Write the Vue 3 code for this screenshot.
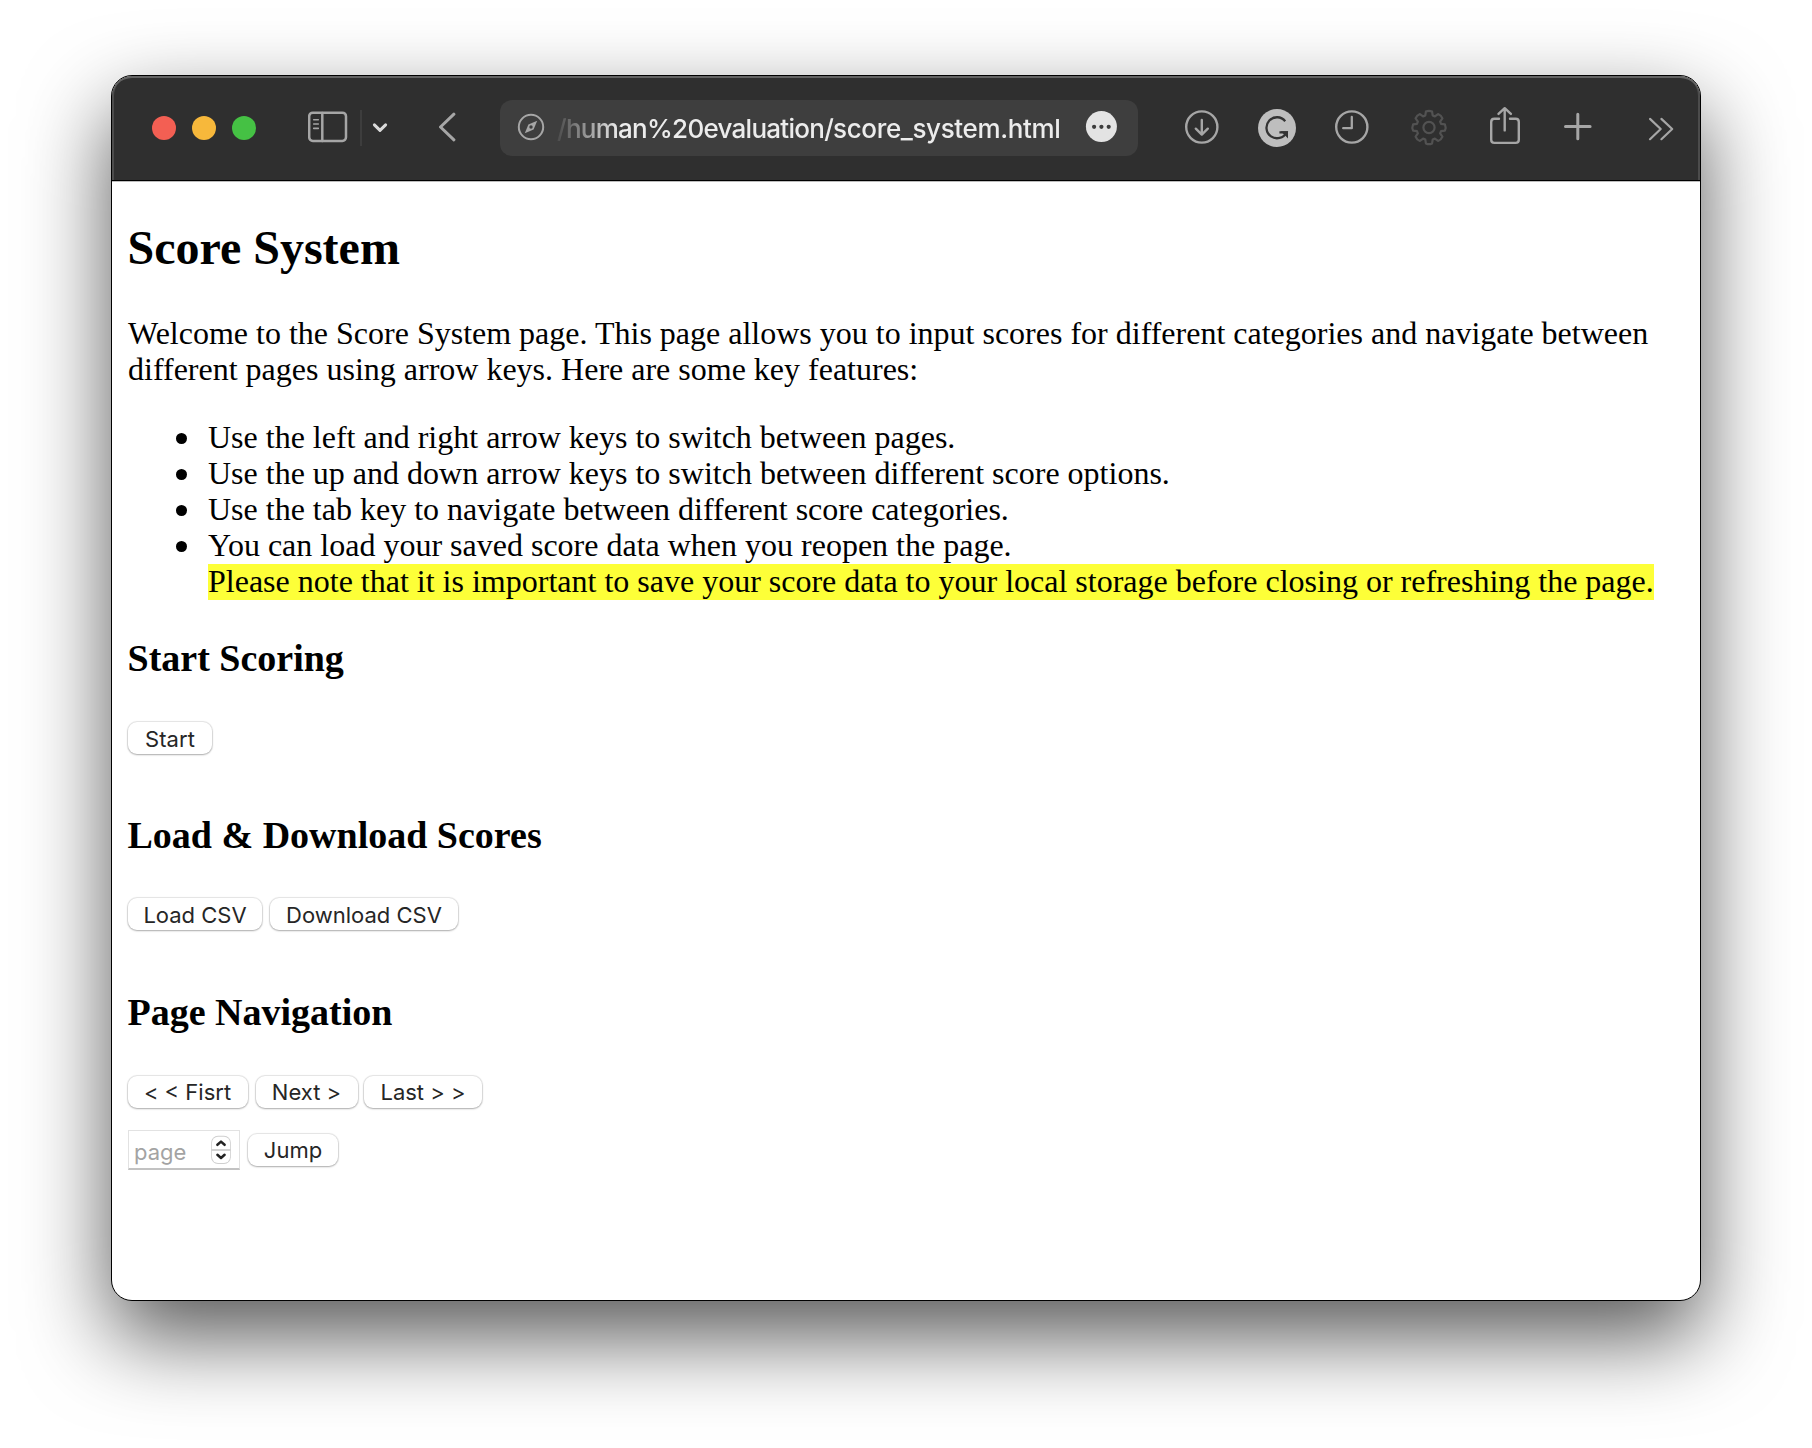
<script setup>
const tips = [
  'Use the left and right arrow keys to switch between pages.',
  'Use the up and down arrow keys to switch between different score options.',
  'Use the tab key to navigate between different score categories.',
]
const lights = ['red', 'amber', 'green']
const teeth = [0, 45, 90, 135, 180, 225, 270, 315]
const rad = (d) => (d * Math.PI) / 180
const pt = (r, d) => `${(r * Math.sin(rad(d))).toFixed(2)} ${(-r * Math.cos(rad(d))).toFixed(2)}`
const gear =
  teeth
    .map((a, i) => `${i ? 'L' : 'M'}${pt(12.6, a - 17)} L${pt(16.2, a - 11)} Q${pt(17.4, a)} ${pt(16.2, a + 11)} L${pt(12.6, a + 17)}`)
    .join(' ') + ' Z'
</script>

<template>
  <div class="desktop">
    <div class="window">
      <header class="toolbar">
        <div class="lights">
          <span v-for="c in lights" :key="c" class="light" :class="c"></span>
        </div>
        <svg class="icon sidebar" width="40" height="56" viewBox="0 0 40 56">
          <rect x="1.2" y="12.7" width="36.8" height="28.2" rx="3.6" stroke-width="2.5" />
          <path d="M14.3 13V41" stroke-width="2.5" />
          <path d="M5.7 19.7h4.6M5.7 24h4.6M5.7 28.4h4.6" stroke-width="1.6" />
        </svg>
        <span class="divider"></span>
        <svg class="icon chevron" width="16" height="56" viewBox="0 0 16 56">
          <path d="M2.4 24.9L8 30.4L13.6 24.9" stroke-width="3" />
        </svg>
        <svg class="icon back" width="18" height="56" viewBox="0 0 18 56">
          <path d="M15.9 14.2L2.5 27L15.9 39.8" stroke-width="3" />
        </svg>
        <div class="address">
          <svg class="icon compass" width="28" height="56" viewBox="0 0 28 56">
            <circle cx="14" cy="27" r="12.2" stroke-width="2" />
            <path class="needle" d="M20.2 20.8L16.6 29.5L7.8 33.3L11.4 24.6Z" />
            <circle class="hub" cx="14" cy="27" r="1.7" />
          </svg>
          <div class="url"><span class="folder">/human%20evaluation/</span><span class="file">score_system.html</span></div>
          <svg class="more" width="32" height="56" viewBox="0 0 32 56">
            <circle cx="16.4" cy="26.6" r="15.5" fill="#e3e3e3" />
            <g fill="#3c3c3c">
              <circle cx="9.1" cy="26.8" r="2.1" />
              <circle cx="16.4" cy="26.8" r="2.1" />
              <circle cx="23.7" cy="26.8" r="2.1" />
            </g>
          </svg>
        </div>
        <svg class="icon download" width="36" height="56" viewBox="0 0 36 56">
          <circle cx="17.8" cy="27" r="15.6" stroke-width="2.4" />
          <path d="M17.8 20V34M11.8 28.7L17.8 34.6L23.8 28.7" stroke-width="2.4" />
        </svg>
        <svg class="icon grammar" width="40" height="56" viewBox="0 0 40 56">
          <circle cx="20" cy="28" r="19" fill="#bebebe" stroke="none" />
          <path class="dark" d="M28.2 21.2A10.5 10.5 0 1 0 29.4 32.4H22.4" stroke-width="2.3" />
          <path d="M23.6 31.2H31V38.4L27.6 35Z" fill="#333" stroke="none" />
        </svg>
        <svg class="icon clock" width="36" height="56" viewBox="0 0 36 56">
          <circle cx="17.8" cy="27" r="15.6" stroke-width="2.4" />
          <path d="M17.8 17V28.2H9.2" stroke-width="2.3" />
        </svg>
        <svg class="icon gear" width="38" height="56" viewBox="-19 -27.5 38 56">
          <path :d="gear" stroke-width="2.2" />
          <circle r="5.6" stroke-width="2.2" />
        </svg>
        <svg class="icon share" width="32" height="56" viewBox="0 0 32 56">
          <path d="M10 18.8H5.4Q2.2 18.8 2.2 22V39.7Q2.2 42.9 5.4 42.9H26.6Q29.8 42.9 29.8 39.7V22Q29.8 18.8 26.6 18.8H21" stroke-width="2.4" />
          <path d="M15.7 30.4V8.6M9.5 13.9L15.7 8.2L21.9 13.9" stroke-width="2.4" />
        </svg>
        <svg class="icon plus" width="28" height="56" viewBox="0 0 28 56">
          <path d="M1.5 26.5H26.1M13.8 14.2V38.8" stroke-width="3" />
        </svg>
        <svg class="icon overflow" width="26" height="56" viewBox="0 0 26 56">
          <path d="M2 18.9L12.7 29L2 39.2M13.4 18.9L24.2 29L13.4 39.2" stroke-width="2.2" />
        </svg>
      </header>

      <main class="page">
        <h2>Score System</h2>
        <p class="intro">
          <span>Welcome to the Score System page. This page allows you to input scores for different categories and navigate between</span><br />
          <span>different pages using arrow keys. Here are some key features:</span>
        </p>
        <ul>
          <li v-for="tip in tips" :key="tip">{{ tip }}</li>
          <li>You can load your saved score data when you reopen the page.<br />
            <mark>Please note that it is important to save your score data to your local storage before closing or refreshing the page.</mark>
          </li>
        </ul>

        <h3>Start Scoring</h3>
        <div class="row">
          <button class="w-start">Start</button>
        </div>

        <h3>Load &amp; Download Scores</h3>
        <div class="row load">
          <button class="w-load">Load CSV</button>
          <button class="w-down">Download CSV</button>
        </div>

        <h3>Page Navigation</h3>
        <div class="row nav">
          <button class="w-first">&lt; &lt; Fisrt</button>
          <button class="w-next">Next &gt;</button>
          <button class="w-last">Last &gt; &gt;</button>
        </div>
        <div class="row jump">
          <div class="field">
            <span>page</span>
            <svg width="22" height="32" viewBox="0 0 22 32">
              <rect class="shade" x="1.2" y="1.8" width="19.6" height="28.2" rx="6.8" />
              <rect class="body" x="2" y="2.8" width="18" height="26.2" rx="6" />
              <path class="split" d="M1.5 16H20.5" />
              <path class="arrows" d="M7.4 10.8L11 7.6L14.6 10.8M7.4 20.8L11 24L14.6 20.8" />
            </svg>
          </div>
          <button class="w-jump">Jump</button>
        </div>
      </main>
    </div>
  </div>
</template>

<style>
html,
body {
  margin: 0;
  background: #fff;
  overflow: hidden;
}
</style>

<style scoped>
.desktop {
  width: 1812px;
  height: 1448px;
  box-sizing: border-box;
  padding: 75px 0 0 111px;
  overflow: hidden;
  background: #fff;
}
.window {
  width: 1588px;
  height: 1224px;
  border: 1px solid #000;
  border-radius: 21px;
  overflow: hidden;
  background: #fff;
  box-shadow: 0 36px 86px rgba(0, 0, 0, 0.66);
}
.toolbar {
  display: flex;
  align-items: flex-start;
  height: 104px;
  box-sizing: border-box;
  padding-top: 24px;
  background: #2f2f2f;
  border-radius: 20px 20px 0 0;
  box-shadow: inset 0 2px 0 #636363, inset 2px 0 0 #4c4c4c, inset -2px 0 0 #4c4c4c, 0 1px 0 #000, 0 2px 0 #bdbdbd;
}
.lights {
  display: flex;
  gap: 16px;
  margin: 16px 0 0 40px;
}
.light {
  width: 24px;
  height: 24px;
  border-radius: 50%;
}
.red { background: #f35f53; }
.amber { background: #f7b83b; }
.green { background: #45c144; }
.icon {
  flex: none;
  fill: none;
  stroke: #a6a6a6;
  stroke-linecap: round;
  stroke-linejoin: round;
}
.sidebar { margin-left: 52px; }
.divider {
  width: 2px;
  height: 36px;
  margin: 10px 0 0 12px;
  background: #3d3d3d;
}
.chevron {
  margin-left: 10px;
  stroke: #dadada;
}
.back { margin-left: 50px; }
.address {
  display: flex;
  flex: none;
  width: 638px;
  height: 56px;
  margin-left: 44px;
  border-radius: 12px;
  background: #3e3e3e;
}
.compass { margin-left: 17px; }
.compass .needle { fill: #a6a6a6; stroke: none; }
.compass .hub { fill: #3e3e3e; stroke: none; }
.url {
  width: 516px;
  margin-left: 12px;
  font: 500 26px/58px Inter, sans-serif;
  white-space: nowrap;
  color: #ececec;
  -webkit-mask-image: linear-gradient(90deg, rgba(0, 0, 0, 0.08) 0, #000 62px);
  mask-image: linear-gradient(90deg, rgba(0, 0, 0, 0.08) 0, #000 62px);
}
.folder { letter-spacing: -0.73px; }
.file { letter-spacing: -0.36px; }
.more { margin-left: 12px; }
.download { margin-left: 46px; }
.grammar { margin-left: 37px; }
.grammar .dark { stroke: #333; stroke-linecap: butt; stroke-linejoin: miter; }
.clock { margin-left: 37px; }
.gear { margin-left: 39.5px; stroke: #525252; }
.share { margin-left: 41px; }
.plus { margin-left: 43px; }
.overflow { margin-left: 56px; }

.page {
  padding: 0 16px;
  font: 32px/36px 'Liberation Serif', 'Times New Roman', serif;
  color: #000;
  white-space: nowrap;
}
h2 {
  margin: 0 0 0 -0.5px;
  padding-top: 41px;
  font-size: 48px;
  line-height: 54px;
}
.intro {
  margin: 40px 0 0;
}
ul {
  margin: 32px 0 0;
  padding-left: 80px;
  list-style: none;
}
li::before {
  content: '';
  display: inline-block;
  width: 11px;
  height: 11px;
  margin: 0 21px 0 -32px;
  border-radius: 50%;
  background: #000;
  vertical-align: 4px;
}
mark {
  display: inline-block;
  height: 36px;
  line-height: 34px;
  background: #fdff38;
  vertical-align: baseline;
}
h3 {
  margin: 0 0 0 -0.5px;
  padding-top: 37px;
  font-size: 38px;
  line-height: 42px;
  height: 42px;
}
.row {
  display: flex;
  height: 32px;
  padding-top: 43px;
  padding-bottom: 23px;
}
.load {
  padding-top: 42px;
  padding-bottom: 24px;
}
button {
  height: 32px;
  padding: 0;
  border: 0;
  border-radius: 9px;
  background: #fff;
  color: #262626;
  font: 400 22px/34px Inter, sans-serif;
  text-align: center;
  white-space: nowrap;
  box-shadow: 0 0 1px 1px rgba(0, 0, 0, 0.1), 0 1px 2px rgba(0, 0, 0, 0.25);
}
.w-start { width: 84px; letter-spacing: 0.1px; }
.w-load { width: 134px; margin-right: 8px; }
.w-down { width: 188px; }
.w-first { width: 120px; margin-right: 8px; }
.w-next { width: 102px; margin-right: 6px; }
.w-last { width: 118px; }
.nav { padding-bottom: 0; }
.nav button,
.jump button { line-height: 32px; }
.w-first,
.w-next { text-indent: -1px; }
.jump {
  align-items: center;
  height: 40px;
  padding: 22px 0 0;
}
.field {
  display: flex;
  align-items: center;
  justify-content: space-between;
  box-sizing: border-box;
  width: 112px;
  height: 40px;
  margin-right: 8px;
  padding: 0 7px 0 5px;
  border: 1px solid #e2e2e2;
  border-bottom: 2px solid #c2c2c2;
  font: 400 22px/38px Inter, sans-serif;
  color: #a3a3a3;
}
.field span { padding-top: 4px; }
.shade { fill: #cfcfcf; }
.body { fill: #fff; }
.split { stroke: #c9c9c9; stroke-width: 1.6; }
.arrows {
  fill: none;
  stroke: #222;
  stroke-width: 2.5;
  stroke-linecap: round;
  stroke-linejoin: round;
}
.w-jump { width: 90px; }
</style>
